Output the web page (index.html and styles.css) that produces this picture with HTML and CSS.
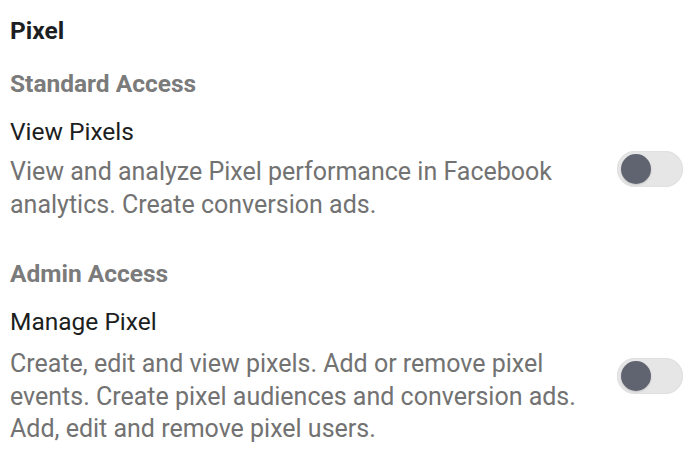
FILE: index.html
```html
<!DOCTYPE html>
<html lang="en">
<head>
<meta charset="utf-8">
<title>Pixel permissions</title>
<link rel="stylesheet" href="styles.css">
</head>
<body>
<main class="panel">
  <h1 class="title">Pixel</h1>

  <h2 class="section section-first">Standard Access</h2>
  <div class="perm">
    <div class="perm-text">
      <div class="perm-name">View Pixels</div>
      <p class="perm-desc">View and analyze Pixel performance in Facebook analytics. Create conversion ads.</p>
    </div>
    <span class="toggle" role="switch" aria-checked="false"><span class="knob"></span></span>
  </div>

  <h2 class="section section-second">Admin Access</h2>
  <div class="perm">
    <div class="perm-text">
      <div class="perm-name">Manage Pixel</div>
      <p class="perm-desc perm-desc-second">Create, edit and view pixels. Add or remove pixel events. Create pixel audiences and conversion ads. Add, edit and remove pixel users.</p>
    </div>
    <span class="toggle" role="switch" aria-checked="false"><span class="knob"></span></span>
  </div>
</main>
</body>
</html>
```

FILE: styles.css
```css
* { box-sizing: border-box; }

html, body {
  margin: 0;
  padding: 0;
  background: #ffffff;
}

body {
  font-family: Roboto, "Liberation Sans", Arial, sans-serif;
  font-size: 24px;
  color: #1c1e21;
}

.panel {
  padding: 15px 17px 0 10px;
}

.title {
  margin: 0;
  font-size: 24.5px;
  font-weight: 700;
  line-height: 32px;
  color: #1c1e21;
}

.section {
  margin: 0;
  font-size: 24.5px;
  font-weight: 700;
  line-height: 32px;
  color: #7b7b7b;
}

.section-first { margin-top: 21px; }
.section-second { margin-top: 37px; }

.perm {
  display: grid;
  grid-template-columns: 1fr auto;
  column-gap: 30px;
  align-items: center;
  margin-top: 16px;
}

.perm-name {
  font-size: 24.5px;
  line-height: 32px;
  color: #1c1e21;
}

.perm-desc {
  margin: 8px 0 0;
  font-size: 25px;
  line-height: 32.5px;
  color: #727272;
}

.perm-desc-second { margin-top: 10px; }

.toggle {
  position: relative;
  display: block;
  width: 66px;
  height: 36px;
  border-radius: 18px;
  background: #e6e6e6;
  box-shadow: inset 0 0 0 1px #e0e0e0;
}

.knob {
  position: absolute;
  left: 4px;
  top: 3px;
  width: 30px;
  height: 30px;
  border-radius: 50%;
  background: #5f6470;
  box-shadow: 0 1px 2px rgba(0, 0, 0, 0.15);
}
```
